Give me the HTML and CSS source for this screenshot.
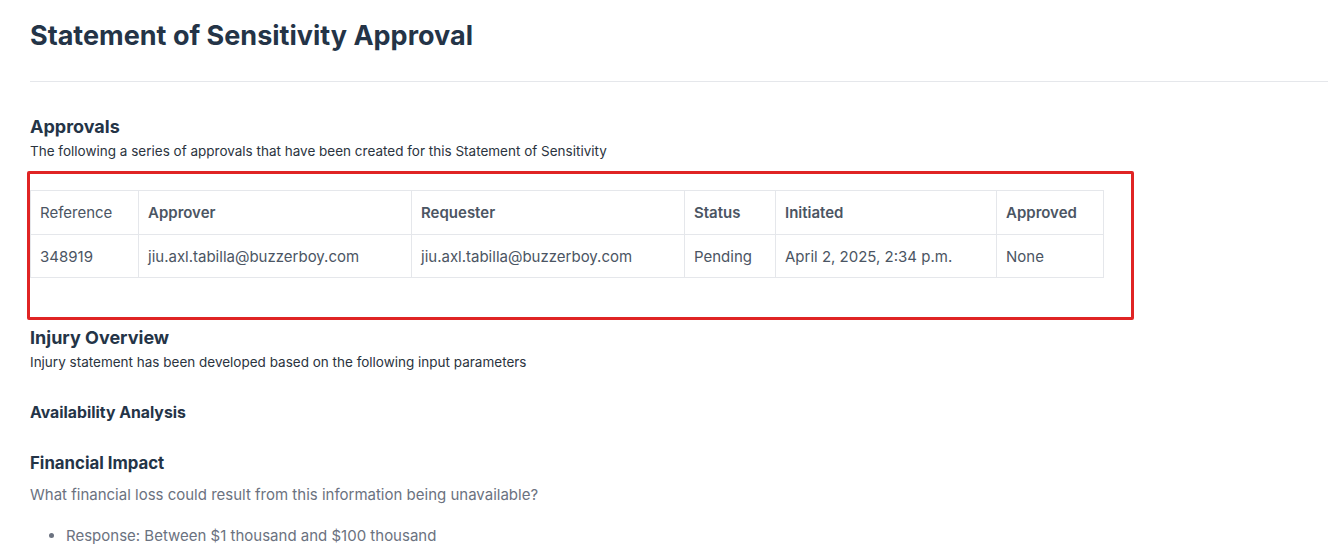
FILE: index.html
```html
<!DOCTYPE html>
<html>
<head>
<meta charset="utf-8">
<link rel="stylesheet" href="styles.css">
</head>
<body>
<main class="page">
  <h1 class="title">Statement of Sensitivity Approval</h1>
  <hr class="rule">
  <section class="section">
    <h2 class="h2">Approvals</h2>
    <p class="desc">The following a series of approvals that have been created for this Statement of Sensitivity</p>
    <div class="highlight">
      <table class="tbl">
        <colgroup>
          <col class="c1"><col class="c2"><col class="c3"><col class="c4"><col class="c5"><col class="c6">
        </colgroup>
        <thead>
          <tr>
            <th class="plain">Reference</th>
            <th>Approver</th>
            <th>Requester</th>
            <th>Status</th>
            <th>Initiated</th>
            <th>Approved</th>
          </tr>
        </thead>
        <tbody>
          <tr>
            <td>348919</td>
            <td>jiu.axl.tabilla@buzzerboy.com</td>
            <td>jiu.axl.tabilla@buzzerboy.com</td>
            <td>Pending</td>
            <td>April 2, 2025, 2:34 p.m.</td>
            <td>None</td>
          </tr>
        </tbody>
      </table>
    </div>
  </section>
  <section class="section injury">
    <h2 class="h2">Injury Overview</h2>
    <p class="desc">Injury statement has been developed based on the following input parameters</p>
    <h3 class="h3 avail">Availability Analysis</h3>
    <h3 class="h3 fin">Financial Impact</h3>
    <p class="question">What financial loss could result from this information being unavailable?</p>
    <ul class="list">
      <li>Response: Between $1 thousand and $100 thousand</li>
    </ul>
  </section>
</main>
</body>
</html>
```

FILE: styles.css
```css
* { box-sizing: border-box; }
html, body { margin: 0; padding: 0; background: #fff; }
body {
  font-family: Inter, "Noto Sans", "Liberation Sans", sans-serif;
  color: #243447;
}
.page { padding: 18px 11px 0 30px; }
.title {
  margin: 0;
  font-size: 27px;
  font-weight: 700;
  line-height: 36px;
  color: #243447;
}
.rule {
  border: 0;
  border-top: 1px solid #e5e7eb;
  margin: 27px 0 0 0;
}
.section { margin: 0; }
.h2 {
  margin: 33px 0 0 0;
  font-size: 18px;
  font-weight: 700;
  line-height: 24px;
  color: #243447;
}
.desc {
  margin: 3px 0 0 0;
  font-size: 13.5px;
  line-height: 19px;
  color: #2b3440;
}
.highlight {
  width: 1107px;
  margin: 10px 0 0 -3px;
  border: 3px solid #e02424;
  border-radius: 2px;
  padding: 16px 0 39px 0;
}
.tbl {
  border-collapse: collapse;
  table-layout: fixed;
  width: 1073px;
  font-size: 15px;
  color: #4b5563;
}
.c1 { width: 108px; }
.c2 { width: 273px; }
.c3 { width: 273px; }
.c4 { width: 91px; }
.c5 { width: 221px; }
.c6 { width: 107px; }
.tbl th, .tbl td {
  border: 1px solid #e5e7eb;
  text-align: left;
  padding: 0 9px;
  white-space: nowrap;
}
.tbl th { height: 44px; font-weight: 600; color: #4b5563; }
.tbl th.plain { font-weight: 400; }
.tbl td { height: 43px; font-weight: 400; }
.injury .h2 { margin-top: 6px; }
.h3 {
  margin: 0;
  font-size: 15.8px;
  font-weight: 700;
  line-height: 22px;
  color: #243447;
}
.avail { margin-top: 30px; }
.fin { margin-top: 28px; font-size: 16.8px; }
.question {
  margin: 11px 0 0 0;
  font-size: 15px;
  line-height: 20px;
  color: #6b7280;
}
.list {
  margin: 21px 0 0 0;
  padding-left: 36px;
  font-size: 15px;
  line-height: 20px;
  color: #6b7280;
}
```
